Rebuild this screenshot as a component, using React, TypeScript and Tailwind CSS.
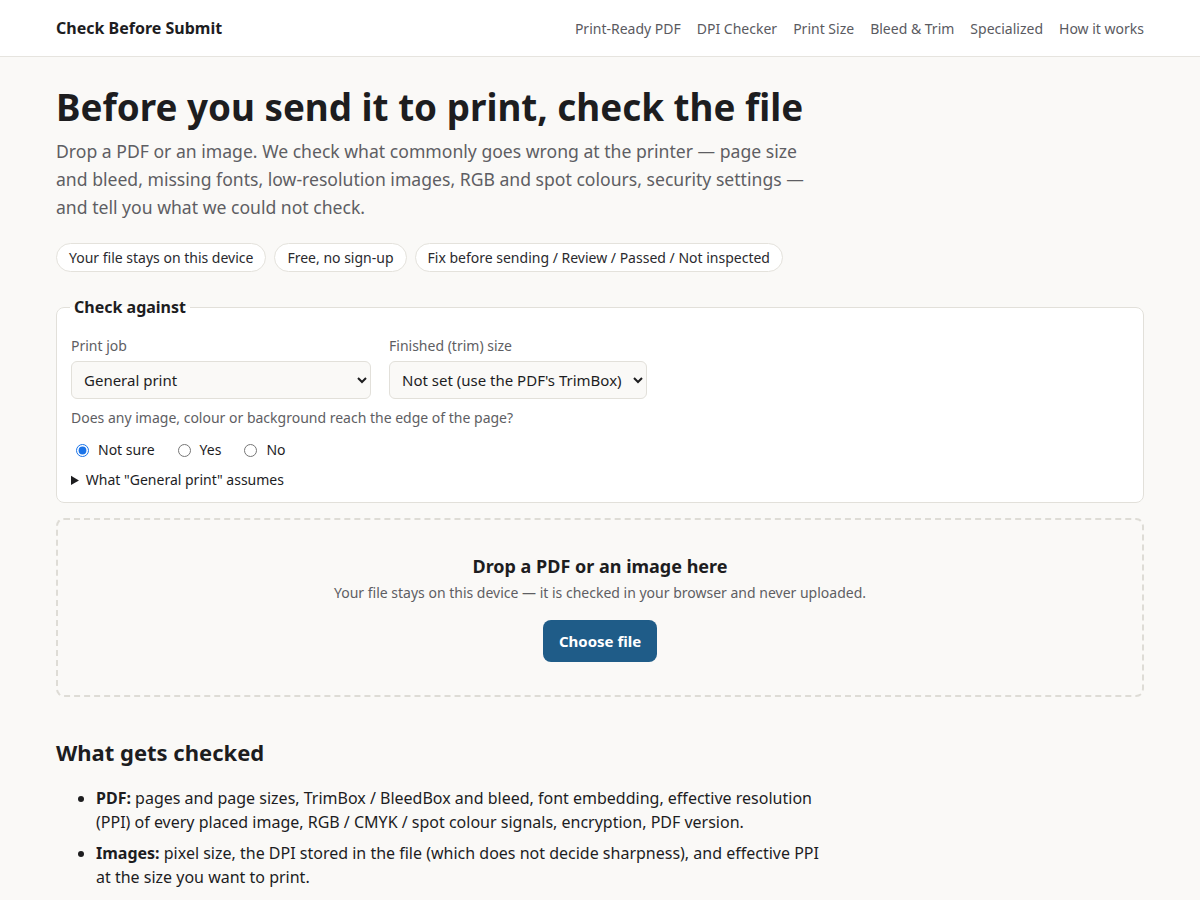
import { useState } from 'react'

const nav = ['Print-Ready PDF', 'DPI Checker', 'Print Size', 'Bleed & Trim', 'Specialized', 'How it works']
const pills = ['Your file stays on this device', 'Free, no sign-up', 'Fix before sending / Review / Passed / Not inspected']

export default function App() {
    const [edge, setEdge] = useState('unsure')

    return (
        <div className="min-h-screen bg-[#faf9f7] text-[#1d1d1f]" style={{ fontFamily: '"Noto Sans", "Open Sans", sans-serif' }}>
            <header className="bg-white border-b border-[#e6e4df]">
                <div className="mx-auto max-w-[1088px] h-[56px] flex items-center justify-between">
                    <a className="font-bold text-[16px] text-[#1d1d1f]">Check Before Submit</a>
                    <nav className="flex gap-4 text-[14px] text-[#5a5a5f]">
                        {nav.map((n) => (
                            <a key={n}>{n}</a>
                        ))}
                    </nav>
                </div>
            </header>

            <main className="mx-auto max-w-[1088px] pt-[25px]">
                <h1 className="text-[36.8px] font-bold leading-[50px]">Before you send it to print, check the file</h1>
                <p className="mt-[5px] max-w-[768px] text-[17.6px] leading-[28px] text-[#5e5e63]">
                    Drop a PDF or an image. We check what commonly goes wrong at the printer — page size and bleed, missing fonts, low-resolution images, RGB and spot colours, security settings — and tell you what we could not check.
                </p>

                <div className="mt-[22px] flex flex-wrap gap-2">
                    {pills.map((p) => (
                        <span key={p} className="px-3 h-[29px] flex items-center rounded-full border border-[#e4e2dc] bg-white text-[14px] text-[#2a2a2e]">
                            {p}
                        </span>
                    ))}
                </div>

                <fieldset className="mt-[23px] rounded-lg border border-[#e2e0da] bg-white px-[14px] pb-[12px] pt-[17px]">
                    <legend className="px-1 ml-[-1px] text-[16px] font-bold">Check against</legend>
                    <div className="flex gap-[18px]">
                        <label className="flex flex-col">
                            <span className="text-[14px] text-[#5e5e63] leading-[20px]">Print job</span>
                            <select className="mt-[5px] w-[300px] h-[38px] rounded-md border border-[#e2e0da] bg-[#faf9f7] px-[8px] text-[15px] text-[#1d1d1f]">
                                <option>General print</option>
                            </select>
                        </label>
                        <label className="flex flex-col">
                            <span className="text-[14px] text-[#5e5e63] leading-[20px]">Finished (trim) size</span>
                            <select className="mt-[5px] h-[38px] rounded-md border border-[#e2e0da] bg-[#faf9f7] px-[8px] text-[15px] text-[#1d1d1f]">
                                <option>Not set (use the PDF's TrimBox)</option>
                            </select>
                        </label>
                    </div>
                    <p className="mt-[9px] text-[14px] leading-[20px] text-[#5e5e63]">Does any image, colour or background reach the edge of the page?</p>
                    <div className="mt-[12px] flex gap-[18px] text-[14px] leading-[20px]">
                        {[['unsure', 'Not sure'], ['yes', 'Yes'], ['no', 'No']].map(([v, l]) => (
                            <label key={v} className="flex items-center gap-[9px] ml-[5px]">
                                <input type="radio" name="edge" checked={edge === v} onChange={() => setEdge(v)} className="w-[13px] h-[13px] accent-[#1a73e8]" />
                                {l}
                            </label>
                        ))}
                    </div>
                    <details className="mt-[10px] text-[14px] leading-[20px]">
                        <summary className="cursor-pointer">What "General print" assumes</summary>
                    </details>
                </fieldset>

                <div className="mt-[15px] rounded-lg border-2 border-dashed border-[#dedcd6] flex flex-col items-center pt-[33px] pb-[33px]">
                    <h2 className="text-[18px] font-bold leading-[26px]">Drop a PDF or an image here</h2>
                    <p className="mt-[4px] text-[14px] leading-[20px] text-[#5e5e63]">Your file stays on this device — it is checked in your browser and never uploaded.</p>
                    <button className="mt-[17px] h-[42px] px-4 rounded-lg bg-[#1f5c88] text-white font-bold text-[15px]">Choose file</button>
                </div>

                <section className="mt-[40px] pb-10 max-w-[768px]">
                    <h2 className="text-[22px] font-bold leading-[30px]">What gets checked</h2>
                    <ul className="mt-[19px] pl-10 list-disc text-[16px] leading-[24px] text-[#1d1d1f] space-y-[7px]">
                        <li>
                            <b>PDF:</b> pages and page sizes, TrimBox / BleedBox and bleed, font embedding, effective resolution (PPI) of every placed image, RGB / CMYK / spot colour signals, encryption, PDF version.
                        </li>
                        <li>
                            <b>Images:</b> pixel size, the DPI stored in the file (which does not decide sharpness), and effective PPI at the size you want to print.
                        </li>
                    </ul>
                </section>
            </main>
        </div>
    )
}
